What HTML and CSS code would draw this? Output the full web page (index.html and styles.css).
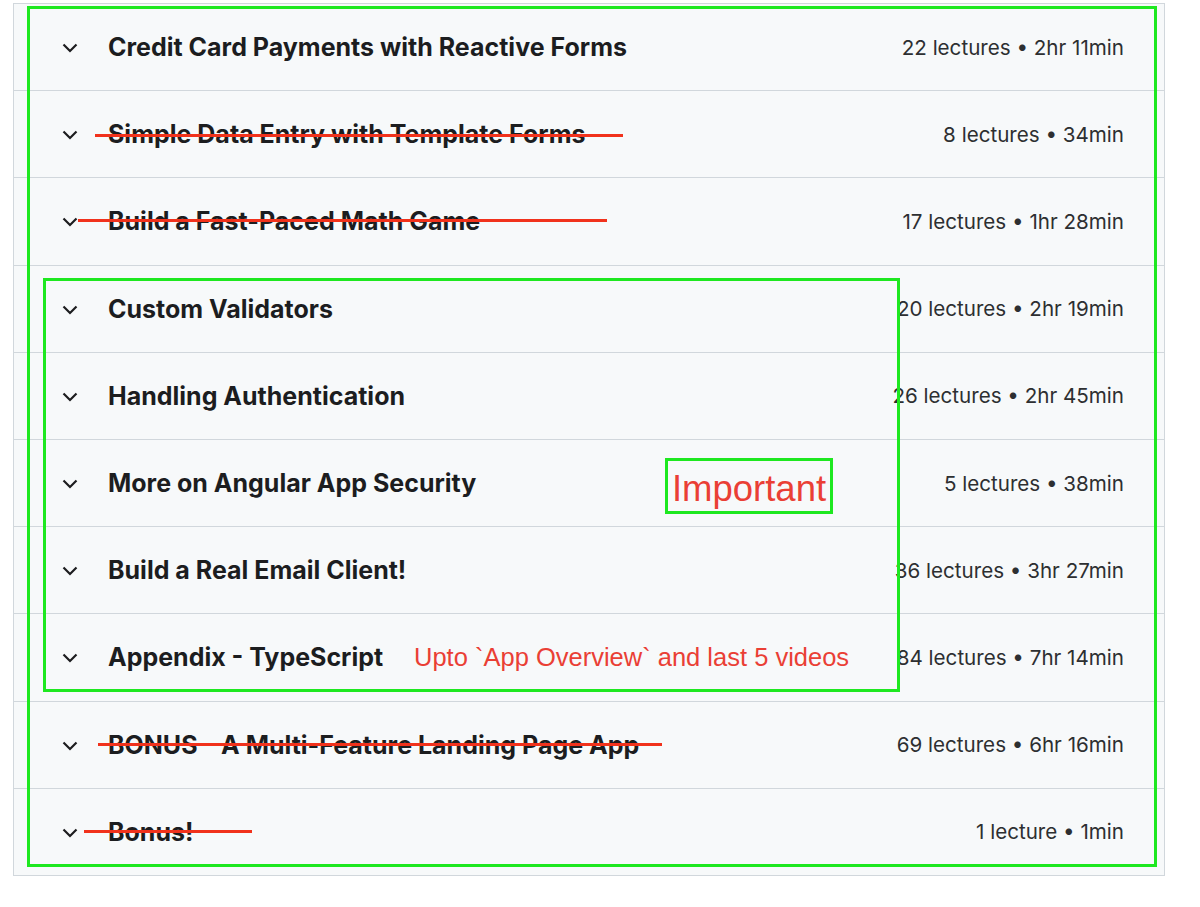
FILE: index.html
```html
<!DOCTYPE html>
<html>
<head>
<meta charset="utf-8">
<link rel="stylesheet" href="styles.css">
</head>
<body>
<div class="page">
  <div class="curriculum">
    <div class="row"><span class="chev"><svg viewBox="0 0 16 10" width="16" height="10"><path d="M1.5 1.5l6.5 6.5 6.5-6.5" fill="none" stroke="#1c1d1f" stroke-width="2.2"/></svg></span><span class="title">Credit Card Payments with Reactive Forms</span><span class="meta">22 lectures • 2hr 11min</span></div>
    <div class="row"><span class="chev"><svg viewBox="0 0 16 10" width="16" height="10"><path d="M1.5 1.5l6.5 6.5 6.5-6.5" fill="none" stroke="#1c1d1f" stroke-width="2.2"/></svg></span><span class="title">Simple Data Entry with Template Forms</span><span class="meta">8 lectures • 34min</span></div>
    <div class="row"><span class="chev"><svg viewBox="0 0 16 10" width="16" height="10"><path d="M1.5 1.5l6.5 6.5 6.5-6.5" fill="none" stroke="#1c1d1f" stroke-width="2.2"/></svg></span><span class="title">Build a Fast-Paced Math Game</span><span class="meta">17 lectures • 1hr 28min</span></div>
    <div class="row"><span class="chev"><svg viewBox="0 0 16 10" width="16" height="10"><path d="M1.5 1.5l6.5 6.5 6.5-6.5" fill="none" stroke="#1c1d1f" stroke-width="2.2"/></svg></span><span class="title">Custom Validators</span><span class="meta">20 lectures • 2hr 19min</span></div>
    <div class="row"><span class="chev"><svg viewBox="0 0 16 10" width="16" height="10"><path d="M1.5 1.5l6.5 6.5 6.5-6.5" fill="none" stroke="#1c1d1f" stroke-width="2.2"/></svg></span><span class="title">Handling Authentication</span><span class="meta">26 lectures • 2hr 45min</span></div>
    <div class="row"><span class="chev"><svg viewBox="0 0 16 10" width="16" height="10"><path d="M1.5 1.5l6.5 6.5 6.5-6.5" fill="none" stroke="#1c1d1f" stroke-width="2.2"/></svg></span><span class="title">More on Angular App Security</span><span class="meta">5 lectures • 38min</span></div>
    <div class="row"><span class="chev"><svg viewBox="0 0 16 10" width="16" height="10"><path d="M1.5 1.5l6.5 6.5 6.5-6.5" fill="none" stroke="#1c1d1f" stroke-width="2.2"/></svg></span><span class="title">Build a Real Email Client!</span><span class="meta">36 lectures • 3hr 27min</span></div>
    <div class="row"><span class="chev"><svg viewBox="0 0 16 10" width="16" height="10"><path d="M1.5 1.5l6.5 6.5 6.5-6.5" fill="none" stroke="#1c1d1f" stroke-width="2.2"/></svg></span><span class="title">Appendix - TypeScript</span><span class="meta">84 lectures • 7hr 14min</span></div>
    <div class="row"><span class="chev"><svg viewBox="0 0 16 10" width="16" height="10"><path d="M1.5 1.5l6.5 6.5 6.5-6.5" fill="none" stroke="#1c1d1f" stroke-width="2.2"/></svg></span><span class="title">BONUS - A Multi-Feature Landing Page App</span><span class="meta">69 lectures • 6hr 16min</span></div>
    <div class="row"><span class="chev"><svg viewBox="0 0 16 10" width="16" height="10"><path d="M1.5 1.5l6.5 6.5 6.5-6.5" fill="none" stroke="#1c1d1f" stroke-width="2.2"/></svg></span><span class="title">Bonus!</span><span class="meta">1 lecture • 1min</span></div>
  </div>

  <div class="box box-outer"></div>
  <div class="box box-inner"></div>
  <div class="box box-important">Important</div>
  <div class="note">Upto `App Overview` and last 5 videos</div>

  <div class="strike s1"></div>
  <div class="strike s2"></div>
  <div class="strike s3"></div>
  <div class="strike s4"></div>
</div>
</body>
</html>
```

FILE: styles.css
```css
html, body {
  margin: 0;
  padding: 0;
  background: #ffffff;
}

.page {
  position: relative;
  width: 1200px;
  height: 907px;
  padding-top: 3px;
  box-sizing: border-box;
}

.curriculum {
  margin-left: 13px;
  width: 1152px;
  box-sizing: border-box;
  border: 1px solid #d1d7dc;
  background: #f7f9fa;
  font-family: Inter, "Noto Sans", sans-serif;
  color: #1c1d1f;
}

.row {
  display: flex;
  align-items: center;
  height: 87.2px;
  box-sizing: border-box;
  padding: 0 40px 0 48px;
  border-bottom: 1px solid #d1d7dc;
}

.row:last-child {
  border-bottom: none;
  height: 86.2px;
}

.chev {
  display: flex;
  width: 16px;
  height: 10px;
  margin-right: 30px;
  margin-top: 2px;
}

.title {
  flex: 1;
  font-size: 25px;
  font-weight: 700;
  letter-spacing: 0;
}

.meta {
  font-size: 20.6px;
  font-weight: 400;
  letter-spacing: 0;
  color: #2d2f31;
}

.box {
  position: absolute;
  border: 3px solid #1ee820;
  box-sizing: border-box;
}

.box-outer {
  left: 27px;
  top: 6px;
  width: 1130px;
  height: 861px;
}

.box-inner {
  left: 43px;
  top: 278px;
  width: 857px;
  height: 414px;
}

.box-important {
  left: 665px;
  top: 458px;
  width: 168px;
  height: 56px;
  color: #ea3f35;
  font-family: "Liberation Sans", Arial, sans-serif;
  font-size: 36.5px;
  line-height: 56px;
  text-align: center;
}

.note {
  position: absolute;
  left: 414px;
  top: 642px;
  color: #ea3f35;
  font-family: "Liberation Sans", Arial, sans-serif;
  font-size: 25.5px;
  line-height: 30px;
  white-space: nowrap;
}

.strike {
  position: absolute;
  height: 3px;
  background: #f1321c;
}

.s1 { left: 95px; top: 134px; width: 528px; }
.s2 { left: 78px; top: 219px; width: 529px; }
.s3 { left: 98px; top: 743px; width: 564px; }
.s4 { left: 84px; top: 830px; width: 168px; }
```
